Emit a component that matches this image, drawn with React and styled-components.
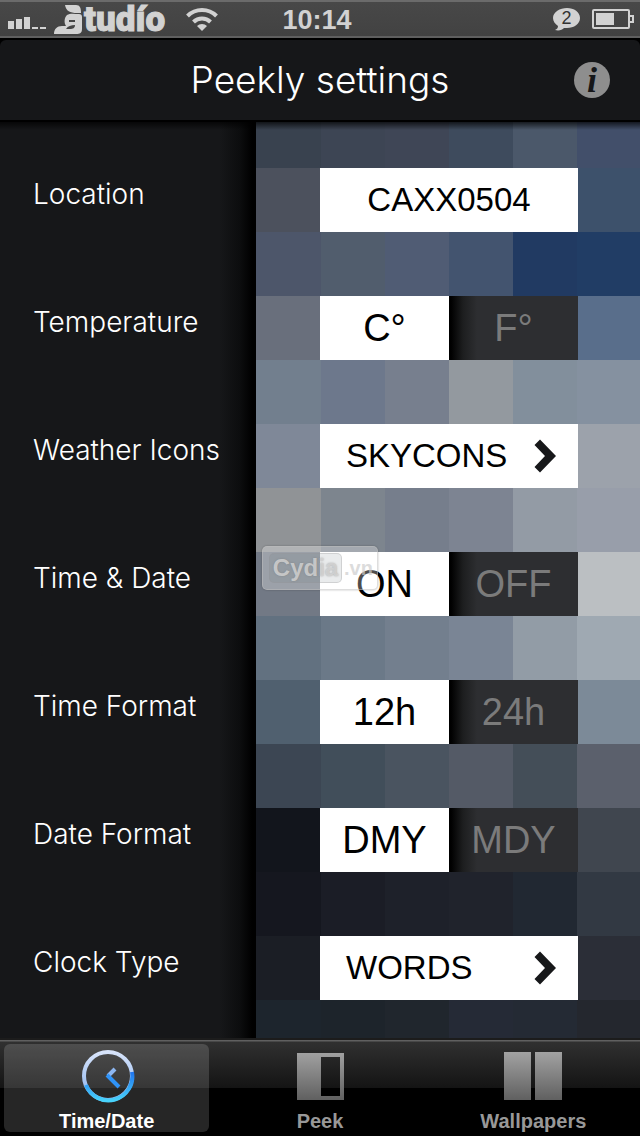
import React, { useState } from 'react'
import styled, { createGlobalStyle } from 'styled-components'

const settings = [
  {
    label: 'Location', id: 'location', type: 'text', value: 'CAXX0504',
    tiles: ['#4c515d', '#4c515d', '#4c515d', '#4c515d', '#3d516b', '#3d516b'],
    below: ['#4d566a', '#515d6d', '#505c74', '#43546f', '#213a62', '#213d65'],
  },
  {
    label: 'Temperature', id: 'temperature', type: 'toggle', options: ['C°', 'F°'],
    tiles: ['#696f7c', '#696f7c', '#696f7c', '#596e8b', '#596e8b', '#596e8b'],
    below: ['#727f8e', '#6d788c', '#777f8e', '#93999f', '#828f9c', '#8591a0'],
  },
  {
    label: 'Weather Icons', id: 'icons', type: 'picker', value: 'SKYCONS',
    tiles: ['#7f8898', '#7f8898', '#7f8898', '#9ca2ab', '#9ca2ab', '#9ca2ab'],
    below: ['#909396', '#7d858e', '#767e8c', '#7d8492', '#939ba5', '#989eaa'],
  },
  {
    label: 'Time & Date', id: 'timedate', type: 'toggle', options: ['ON', 'OFF'], watermark: true,
    tiles: ['#727985', '#727985', '#727985', '#bbbfc2', '#bbbfc2', '#bbbfc2'],
    below: ['#627180', '#6b7988', '#737f8e', '#7a8595', '#929ca6', '#9fa9b2'],
  },
  {
    label: 'Time Format', id: 'timeformat', type: 'toggle', options: ['12h', '24h'],
    tiles: ['#50606f', '#50606f', '#50606f', '#7c8a98', '#7c8a98', '#7c8a98'],
    below: ['#3c4653', '#414e5a', '#4a5460', '#545a66', '#444e58', '#5b606c'],
  },
  {
    label: 'Date Format', id: 'dateformat', type: 'toggle', options: ['DMY', 'MDY'],
    tiles: ['#12151c', '#12151c', '#12151c', '#40464f', '#40464f', '#40464f'],
    below: ['#15171f', '#1b1d26', '#1e212a', '#20232c', '#212832', '#323943'],
  },
  {
    label: 'Clock Type', id: 'clocktype', type: 'picker', value: 'WORDS',
    tiles: ['#1b1e25', '#1b1e25', '#1b1e25', '#2b2e37', '#2b2e37', '#2b2e37'],
    below: ['#1d252d', '#1d242b', '#20262d', '#252a36', '#242a34', '#24272e'],
  },
]

const topTiles = ['#39424f', '#3d4554', '#3f4656', '#3e4b5d', '#4b586a', '#424f6a']

function mosaic(tiles) {
  const stops = tiles.map((color, i) => {
    const from = i === 0 ? 0 : i * 64 + 1
    const to = i === tiles.length - 1 ? '100%' : `${(i + 1) * 64 + 1}px`
    return `${color} ${from}px ${to}`
  })
  return `linear-gradient(90deg, ${stops.join(', ')})`
}

function StatusBar() {
  return (
    <Status>
      <StatusSide>
        <svg width="40" height="20" viewBox="0 0 40 20" fill="#d2d2d2" aria-label="Signal">
          <path d="M0 12h6v8H0zM8 10h6v10H8zM16 8h6v12h-6zM24 18h6v2h-6zM32 18h6v2h-6z" />
        </svg>
        <Carrier>
          <svg width="30" height="32" viewBox="0 0 30 32" fill="#d2d2d2" aria-label="S">
            <path d="M11 2h11c4 0 5 3 5 8h-4c-7 0-11-2-12-8z" />
            <path d="M13 12c3-2 8-1 12-1 2 0 3 1 3 3v12c0 4-2 5-6 5H0c0-5 3-8 8-8h4c-2-3-2-8 1-11z" />
            <path d="M12 26c2-3 5-4 9-4 0 3-2 4-5 4zM15 17h6v2h-6z" fill="#454545" />
          </svg>
          <CarrierName>tudío</CarrierName>
        </Carrier>
        <svg width="32" height="24" viewBox="0 0 32 24" fill="none" stroke="#d2d2d2" strokeWidth="4" aria-label="Wi-Fi">
          <path d="M1.500 9a20.500 20.500 0 0 1 29 0" />
          <path d="M7.500 15a12 12 0 0 1 17 0" />
          <path d="M16 24l-5-5a7 7 0 0 1 10 0z" fill="#d2d2d2" stroke="none" />
        </svg>
      </StatusSide>
      <Clock>10:14</Clock>
      <StatusSide $end>
        <Bubble>
          <svg width="27" height="23" viewBox="0 0 27 23" fill="#d2d2d2" aria-hidden="true">
            <path d="M14 0c7 0 13 4 13 10s-6 10-13 10h-3c-2 2-5 3-9 2 2-1 3-2 3-4-3-2-5-5-5-8C0 4 7 0 14 0z" />
          </svg>
          <BubbleCount>2</BubbleCount>
        </Bubble>
        <svg width="42" height="20" viewBox="0 0 42 20" aria-label="Battery">
          <rect x="1" y="1" width="36" height="18" rx="1" fill="none" stroke="#d2d2d2" strokeWidth="2" />
          <path d="M4 4h18v12H4z" fill="#d2d2d2" />
          <path d="M38 7h3v6h-3" fill="none" stroke="#d2d2d2" strokeWidth="2" />
        </svg>
      </StatusSide>
    </Status>
  )
}

function Toggle({ id, options }) {
  const [active, setActive] = useState(options[0])
  return (
    <Control role="radiogroup" aria-labelledby={`${id}-label`}>
      {options.map((option) => (
        <Segment key={option} $active={option === active}>
          <HiddenRadio
            type="radio"
            name={id}
            checked={option === active}
            onChange={() => setActive(option)}
          />
          {option}
        </Segment>
      ))}
    </Control>
  )
}

function Picker({ id, value }) {
  return (
    <PickerButton type="button" aria-labelledby={`${id}-label`}>
      {value}
      <svg width="22" height="34" viewBox="0 0 22 34" fill="#17181a" aria-hidden="true">
        <path d="M0.500 6L6 0.500L22 17L6 33.500L0.500 28L11 17z" />
      </svg>
    </PickerButton>
  )
}

function Setting({ item }) {
  const [text, setText] = useState(item.value)
  return (
    <Row>
      <Label as={item.type === 'text' ? 'label' : 'span'} id={`${item.id}-label`} htmlFor={item.type === 'text' ? item.id : undefined}>
        {item.label}
      </Label>
      <Pane $tiles={item.tiles}>
        {item.type === 'text' && (
          <TextBox id={item.id} value={text} onChange={(e) => setText(e.target.value)} />
        )}
        {item.type === 'toggle' && <Toggle id={item.id} options={item.options} />}
        {item.type === 'picker' && <Picker id={item.id} value={item.value} />}
        {item.watermark && (
          <Watermark>
            <WatermarkBox>Cydia</WatermarkBox>
            .vn
          </Watermark>
        )}
      </Pane>
    </Row>
  )
}

function App() {
  return (
    <Maincontainer>
      <GlobalStyle />
      <StatusBar />
      <Header>
        <Title>Peekly settings</Title>
        <InfoButton type="button" aria-label="Info">i</InfoButton>
      </Header>
      <Body>
        <TopStrip $tiles={topTiles} />
        {settings.map((item) => (
          <React.Fragment key={item.id}>
            <Setting item={item} />
            <Strip $tiles={item.below} />
          </React.Fragment>
        ))}
      </Body>
      <Tabbar>
        <Tab type="button" $active aria-current="page">
          <svg width="56" height="56" viewBox="0 0 56 56" fill="none" aria-hidden="true">
            <defs>
              <linearGradient id="rim" x1="0" y1="0" x2="0" y2="1">
                <stop offset="0" stopColor="#d8e4fa" />
                <stop offset="1" stopColor="#86b0ee" />
              </linearGradient>
              <linearGradient id="glow" x1="0" y1="0" x2="0" y2="1">
                <stop offset="0" stopColor="#1f74ee" />
                <stop offset="1" stopColor="#48d2fb" />
              </linearGradient>
            </defs>
            <circle cx="29" cy="28" r="24" stroke="url(#rim)" strokeWidth="4" />
            <path d="M53 24a24 24 0 0 1-46 13" stroke="url(#glow)" strokeWidth="4" />
            <path d="M36 21l-7 7" stroke="#8db6f0" strokeWidth="4" />
            <path d="M28 27l12 12" stroke="#2f93f8" strokeWidth="4" />
          </svg>
          <TabLabel>Time/Date</TabLabel>
        </Tab>
        <Tab type="button">
          <svg width="56" height="56" viewBox="0 0 56 56" aria-hidden="true">
            <defs>
              <linearGradient id="metal" x1="0" y1="4" x2="0" y2="52" gradientUnits="userSpaceOnUse">
                <stop offset="0" stopColor="#a2a2a2" />
                <stop offset="1" stopColor="#606060" />
              </linearGradient>
            </defs>
            <path d="M5 5h47v47H5zM29 9v39h19V9z" fill="url(#metal)" fillRule="evenodd" />
          </svg>
          <TabLabel>Peek</TabLabel>
        </Tab>
        <Tab type="button">
          <svg width="58" height="56" viewBox="0 0 58 56" aria-hidden="true">
            <path d="M0 4h27v48H0zM31 4h27v48H31z" fill="url(#metal)" />
          </svg>
          <TabLabel>Wallpapers</TabLabel>
        </Tab>
      </Tabbar>
    </Maincontainer>
  )
}

export default App


const GlobalStyle = createGlobalStyle`
  * {
    box-sizing: border-box;
  }
  body {
    margin: 0;
    background: #000;
    font-family: "Liberation Sans", Arial, sans-serif;
  }
  svg {
    display: block;
    flex: none;
  }
`;
const Maincontainer = styled.main`
  display: flex;
  flex-direction: column;
  min-height: 100vh;
`;
const Status = styled.div`
  display: grid;
  grid-template-columns: 1fr auto 1fr;
  align-items: center;
  height: 38px;
  padding-right: 6px;
  border-top: 2px solid #6b6b6b;
  border-bottom: 2px solid #606060;
  background: linear-gradient(#484848, #424242);
`;
const StatusSide = styled.div`
  display: flex;
  align-items: center;
  justify-content: ${(props) => (props.$end ? 'flex-end' : 'flex-start')};
  gap: ${(props) => (props.$end ? '12px' : '6px')};
  padding-left: 8px;
`;
const Carrier = styled.div`
  display: flex;
  align-items: center;
  width: 126px;
`;
const CarrierName = styled.span`
  padding-top: 2px;
  color: #d2d2d2;
  font: 900 35px/32px Roboto, sans-serif;
  -webkit-text-stroke: 1px #d2d2d2;
`;
const Clock = styled.time`
  padding-top: 2px;
  color: #d2d2d2;
  font-size: 27px;
  font-weight: bold;
`;
const Bubble = styled.div`
  position: relative;
`;
const BubbleCount = styled.span`
  position: absolute;
  inset: 0;
  color: #333;
  font-size: 18px;
  line-height: 20px;
  text-align: center;
`;
const Header = styled.header`
  display: grid;
  grid-template-columns: 1fr auto 1fr;
  align-items: center;
  height: 80px;
  margin-top: 2px;
  padding: 0 30px;
  border-radius: 6px 6px 0 0;
  background: #161719;
`;
const Title = styled.h1`
  grid-column: 2;
  margin: 0;
  color: #fff;
  font-family: Inter, sans-serif;
  font-size: 37px;
  font-weight: 300;
  line-height: 44px;
`;
const InfoButton = styled.button`
  justify-self: end;
  width: 36px;
  height: 36px;
  padding: 0;
  border: 0;
  border-radius: 50%;
  background: #8e8e8e;
  color: #161719;
  font: italic bold 36px/36px "Liberation Serif", serif;
`;
const Body = styled.section`
  position: relative;
  display: flex;
  flex: 1;
  flex-direction: column;
  margin-top: 2px;
  background: linear-gradient(90deg, #161719 calc(40% - 36px), #0c0d0e calc(40% - 16px), #000 calc(40% - 4px));

  &::before {
    content: '';
    position: absolute;
    inset: 0 0 auto;
    height: 8px;
    background: linear-gradient(rgba(0, 0, 0, 0.7), transparent);
  }
`;
const Strip = styled.div`
  min-height: 64px;
  margin-left: 40%;
  background: ${(props) => mosaic(props.$tiles)};

  &:last-child {
    flex: 1;
    min-height: 38px;
  }
`;
const TopStrip = styled(Strip)`
  min-height: 46px;
`;
const Row = styled.div`
  display: grid;
  grid-template-columns: 40% 1fr;
`;
const Label = styled.span`
  padding-left: 33px;
  color: #fff;
  font-family: Inter, sans-serif;
  font-size: 28px;
  font-weight: 300;
  line-height: 52px;
  white-space: nowrap;
`;
const Pane = styled.div`
  position: relative;
  padding: 0 62px 0 64px;
  background: ${(props) => mosaic(props.$tiles)};
`;
const Control = styled.div`
  display: flex;
  height: 64px;
`;
const Segment = styled.label`
  flex: 1;
  color: ${(props) => (props.$active ? '#000' : '#7b7b7b')};
  background: ${(props) => (props.$active ? '#fff' : 'linear-gradient(90deg, #000 2px, #1d1e1f 14px, #2d2e31 28px)')};
  font-size: 38px;
  line-height: 64px;
  text-align: center;
`;
const HiddenRadio = styled.input`
  position: absolute;
  opacity: 0;
  pointer-events: none;
`;
const TextBox = styled.input`
  display: block;
  width: 100%;
  height: 64px;
  padding: 0;
  border: 0;
  background: #fff;
  color: #000;
  font: 33px "Liberation Sans", Arial, sans-serif;
  text-align: center;
`;
const PickerButton = styled.button`
  display: flex;
  align-items: center;
  justify-content: space-between;
  width: 100%;
  height: 64px;
  padding: 0 22px 0 26px;
  border: 0;
  background: #fff;
  color: #000;
  font: 33px "Liberation Sans", Arial, sans-serif;
`;
const Watermark = styled.div`
  position: absolute;
  top: -6px;
  left: 6px;
  display: flex;
  align-items: center;
  gap: 2px;
  width: 116px;
  height: 44px;
  padding: 0 6px;
  border: 1px solid rgba(190, 190, 190, 0.5);
  border-radius: 5px;
  background: rgba(255, 255, 255, 0.3);
  box-shadow: 0 0 2px rgba(0, 0, 0, 0.3);
  color: rgba(205, 205, 205, 0.7);
  font-size: 20px;
  font-weight: bold;
  pointer-events: none;
`;
const WatermarkBox = styled.span`
  flex: none;
  width: 73px;
  height: 30px;
  border: 1px solid rgba(150, 150, 150, 0.3);
  border-radius: 5px;
  background: rgba(110, 120, 130, 0.15);
  color: rgba(215, 215, 215, 0.8);
  font-size: 24px;
  line-height: 28px;
  text-align: center;
  text-shadow: 0 0 2px rgba(120, 120, 120, 0.6);
`;
const Tabbar = styled.nav`
  display: flex;
  height: 98px;
  border-top: 2px solid #1c1c1c;
  background: linear-gradient(#606060 1px, #303030 2px, #141414 48px, #000 48px);
`;
const Tab = styled.button`
  display: flex;
  flex: 1;
  flex-direction: column;
  align-items: center;
  margin: 4px;
  padding: 4px 0 0;
  border: 0;
  border-radius: 6px;
  background: ${(props) => (props.$active ? 'rgba(255, 255, 255, 0.15)' : 'transparent')};
  color: ${(props) => (props.$active ? '#fff' : '#989898')};
`;
const TabLabel = styled.span`
  margin-top: 5px;
  font: bold 20px/24px "Liberation Sans", Arial, sans-serif;
`;
